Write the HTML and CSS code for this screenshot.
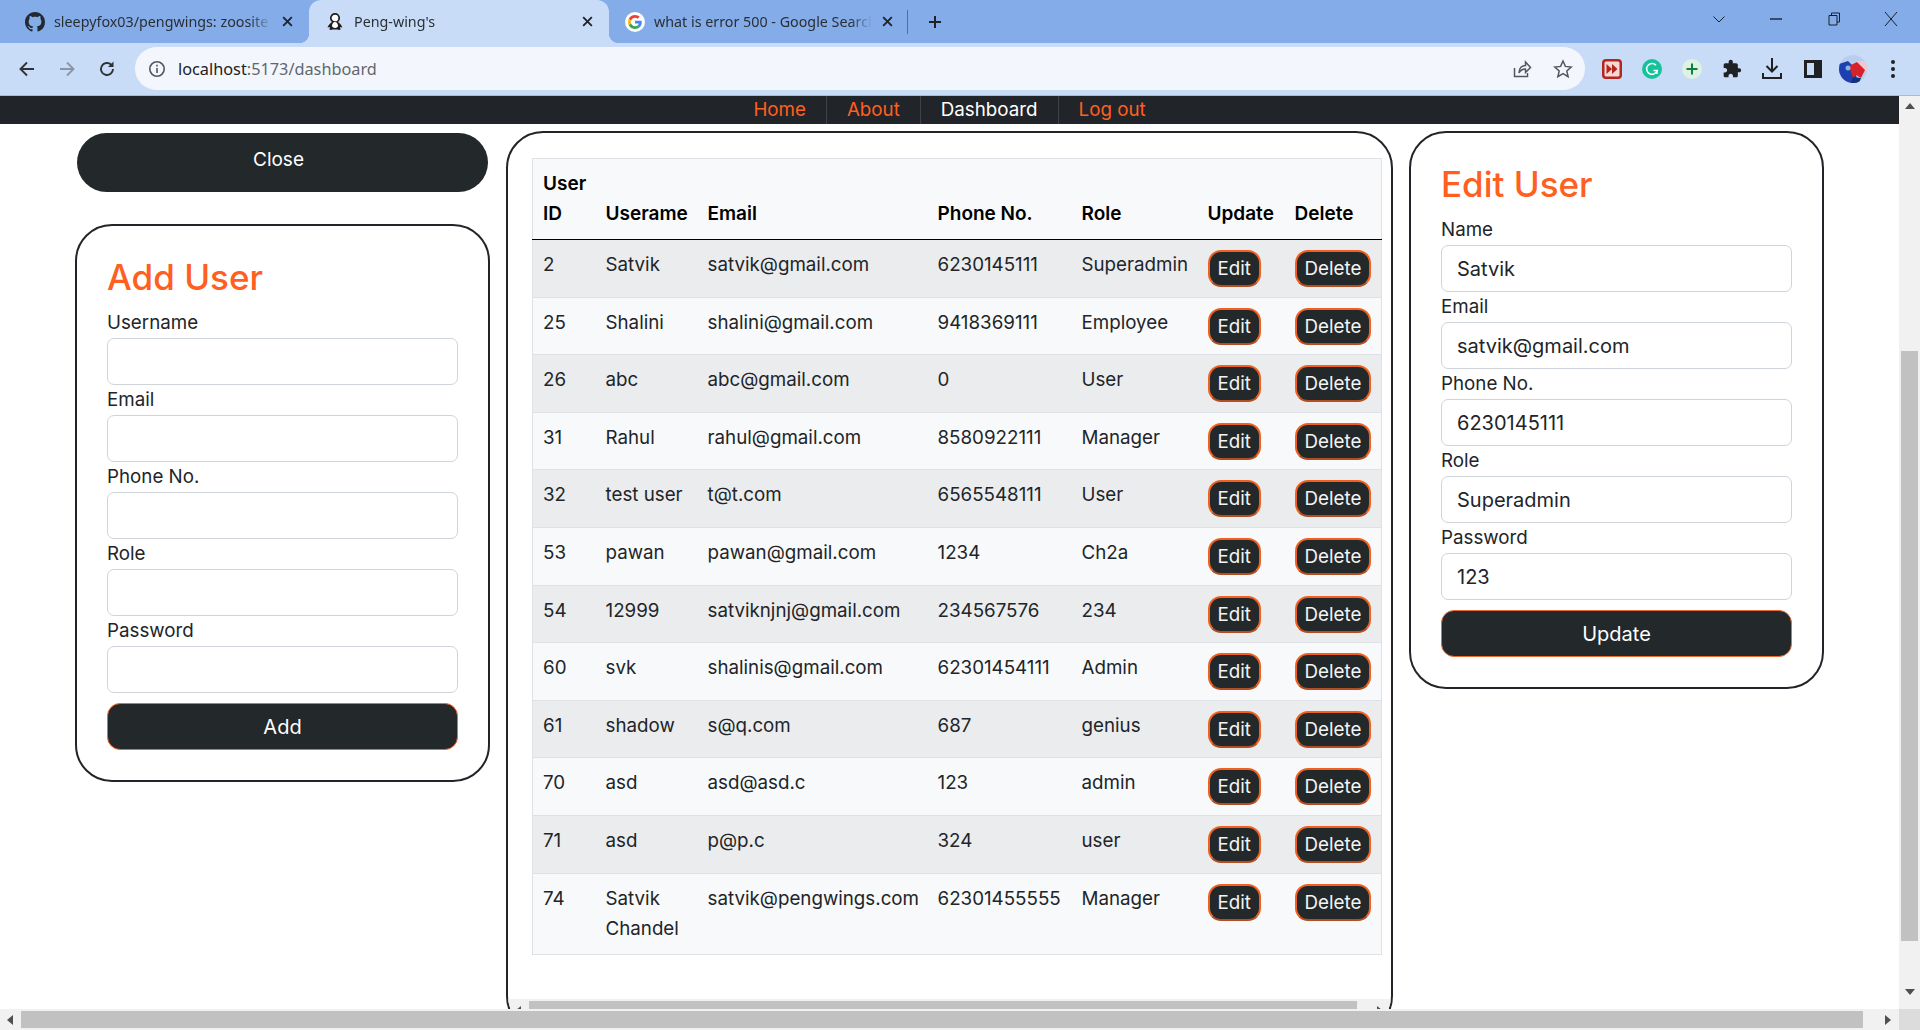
FILE: index.html
```html
<!DOCTYPE html>
<html lang="en">
<head>
    <meta charset="UTF-8">
    <meta name="viewport" content="width=device-width, initial-scale=1.0">
    <title>Peng-wing's</title>
    <link rel="stylesheet" href="styles.css">
</head>
<body>
    <!-- browser chrome -->
    <div class="tabstrip">
        <div class="tab">
            <svg class="tab-icon" viewBox="0 0 16 16"><path fill="#24292f" d="M8 0C3.58 0 0 3.58 0 8c0 3.54 2.29 6.53 5.47 7.59.4.07.55-.17.55-.38 0-.19-.01-.82-.01-1.49-2.01.37-2.53-.49-2.69-.94-.09-.23-.48-.94-.82-1.13-.28-.15-.68-.52-.01-.53.63-.01 1.08.58 1.23.82.72 1.21 1.87.87 2.33.66.07-.52.28-.87.51-1.07-1.78-.2-3.64-.89-3.64-3.95 0-.87.31-1.59.82-2.15-.08-.2-.36-1.02.08-2.12 0 0 .67-.21 2.2.82.64-.18 1.32-.27 2-.27.68 0 1.36.09 2 .27 1.53-1.04 2.2-.82 2.2-.82.44 1.1.16 1.92.08 2.12.51.56.82 1.27.82 2.15 0 3.07-1.87 3.75-3.65 3.95.29.25.54.73.54 1.48 0 1.07-.01 1.93-.01 2.2 0 .21.15.46.55.38A8.013 8.013 0 0016 8c0-4.42-3.58-8-8-8z"/></svg>
            <span class="tab-title">sleepyfox03/pengwings: zoosite is</span>
            <svg class="tab-close" viewBox="0 0 12 12"><path d="M2 2l8 8M10 2l-8 8"/></svg>
        </div>
        <div class="tab tab-active">
            <svg class="tab-icon" viewBox="0 0 20 20"><path fill="#1d1d1f" d="M10 9c-3 0-6 3-7.500 6.500L5 15l-.6 2.500c1 .5 2.200.5 3.100 0h5c.9.5 2.100.5 3.100 0L15 15l2.500.5C16 12 13 9 10 9z"/><circle cx="10" cy="6" r="4.200" fill="#fff" stroke="#1d1d1f" stroke-width="1.700"/><path fill="#fff" d="M10 10c-1.800 0-3 2-3 3.800 0 1.300 1.300 2.200 3 2.200s3-.9 3-2.200c0-1.800-1.200-3.800-3-3.800z"/></svg>
            <span class="tab-title">Peng-wing's</span>
            <svg class="tab-close" viewBox="0 0 12 12"><path d="M2 2l8 8M10 2l-8 8"/></svg>
        </div>
        <div class="tab">
            <span class="tab-icon g-circle">
                <svg viewBox="0 0 48 48"><path fill="#EA4335" d="M24 9.500c3.500 0 6.700 1.200 9.200 3.600l6.900-6.900C35.900 2.400 30.500 0 24 0 14.600 0 6.500 5.400 2.600 13.200l8 6.200C12.400 13.700 17.700 9.500 24 9.500z"/><path fill="#4285F4" d="M47 24.500c0-1.600-.1-3.100-.4-4.500H24v9h12.900c-.6 3-2.200 5.500-4.700 7.200l7.700 6C44.400 37.900 47 31.800 47 24.500z"/><path fill="#FBBC05" d="M10.500 28.600c-.5-1.400-.8-3-.8-4.600s.3-3.200.8-4.600l-8-6.200C.9 16.500 0 20.100 0 24s.9 7.500 2.600 10.800l7.900-6.200z"/><path fill="#34A853" d="M24 48c6.500 0 11.900-2.100 15.900-5.800l-7.700-6c-2.100 1.400-4.900 2.300-8.200 2.300-6.300 0-11.600-4.200-13.500-9.900l-8 6.200C6.500 42.600 14.600 48 24 48z"/></svg>
            </span>
            <span class="tab-title">what is error 500 - Google Search</span>
            <svg class="tab-close" viewBox="0 0 12 12"><path d="M2 2l8 8M10 2l-8 8"/></svg>
        </div>
        <div class="tab-sep"></div>
        <svg class="new-tab" viewBox="0 0 16 16"><path d="M8 2v12M2 8h12"/></svg>
        <div class="window-controls">
            <div class="win-btn"><svg viewBox="0 0 14 14" width="14" height="14"><path d="M1.500 4.500L7 10l5.500-5.500"/></svg></div>
            <div class="win-btn"><svg viewBox="0 0 14 14" width="14" height="14"><path d="M1 7h12" stroke-width="1.400"/></svg></div>
            <div class="win-btn"><svg viewBox="0 0 14 14" width="14" height="14"><path d="M2 3.500h8V13H2zM4.500 3.500V1H12.500v9H10"/></svg></div>
            <div class="win-btn"><svg viewBox="0 0 14 14" width="14" height="14"><path d="M1 0l12 14M13 0L1 14"/></svg></div>
        </div>
    </div>

    <div class="toolbar">
        <div class="tool-nav">
            <svg class="tool-icon" viewBox="0 0 20 20"><path d="M17 10H4M10 3.500L3.500 10l6.500 6.500"/></svg>
            <svg class="tool-icon tool-icon-off" viewBox="0 0 20 20"><path d="M3 10h13M10 3.500l6.500 6.500-6.500 6.500"/></svg>
            <svg class="tool-icon" viewBox="0 0 20 20"><path d="M16 10a6 6 0 1 1-1.800-4.300"/><path class="solid" d="M16.500 2.500v5.500H11z"/></svg>
        </div>
        <div class="address">
            <svg class="info-icon" viewBox="0 0 18 18"><circle cx="9" cy="9" r="7.200"/><path d="M9 8v5M9 4.800v1.600"/></svg>
            <span class="url"><span class="url-host">localhost</span>:5173/dashboard</span>
            <svg class="addr-icon" viewBox="0 0 20 20"><path d="M2.500 9v8.500h13V14"/><path d="M7 14c0-5 3-7.500 6.500-7.500V3l5 5.500-5 5V10c-3 0-5 1-6.500 4z"/></svg>
            <svg class="addr-icon" viewBox="0 0 20 20"><path d="M10 2l2.400 5.400 5.800.6-4.400 3.900 1.300 5.800-5.100-3-5.100 3 1.300-5.800L1.800 8l5.800-.6z"/></svg>
        </div>
        <div class="extensions">
            <div class="ext"><svg width="20" height="20" viewBox="0 0 20 20"><rect width="20" height="20" rx="4" fill="#b3261e"/><rect x="2.500" y="2.500" width="15" height="15" rx="1.500" fill="#f6d9d6"/><path fill="#b3261e" d="M4.500 5l5.500 5-5.500 5zM10 5l5.500 5-5.500 5z"/></svg></div>
            <div class="ext"><svg width="20" height="20" viewBox="0 0 20 20"><circle cx="10" cy="10" r="10" fill="#15c39a"/><path fill="none" stroke="#fff" stroke-width="1.600" d="M14 6.200A5.400 5.400 0 1 0 15.200 11.500H11.500"/><path fill="#fff" d="M15.800 15l-3.200-.4 2.800-2.800z"/></svg></div>
            <div class="ext"><svg width="20" height="20" viewBox="0 0 20 20"><circle cx="10" cy="10" r="10" fill="#dff1e2"/><path fill="none" stroke="#0b8043" stroke-width="2" d="M10 4.500v11M4.500 10h11"/></svg></div>
            <div class="ext"><svg width="20" height="20" viewBox="0 0 24 24"><path fill="#202124" d="M20.500 11H19V7c0-1.100-.9-2-2-2h-4V3.500C13 2.120 11.880 1 10.500 1S8 2.120 8 3.500V5H4c-1.100 0-1.990.9-1.990 2v3.800H3.500c1.490 0 2.700 1.210 2.700 2.700s-1.210 2.700-2.700 2.700H2V20c0 1.100.9 2 2 2h3.800v-1.500c0-1.490 1.210-2.700 2.700-2.700 1.490 0 2.700 1.210 2.700 2.700V22H17c1.100 0 2-.9 2-2v-4h1.500c1.380 0 2.500-1.120 2.500-2.500S21.880 11 20.500 11z"/></svg></div>
            <div class="ext"><svg width="20" height="21" viewBox="0 0 20 21" fill="none" stroke="#202124" stroke-width="2"><path d="M10 0v13M4.500 8l5.500 5.500L15.500 8M1 15v5h18v-5"/></svg></div>
            <div class="ext"><svg width="18" height="18" viewBox="0 0 18 18"><path fill="#202124" fill-rule="evenodd" d="M0 0h18v18H0zM3 3v12h7V3z"/></svg></div>
            <div class="ext"><svg width="28" height="28" viewBox="0 0 28 28"><defs><clipPath id="avatarClip"><circle cx="14" cy="14" r="14"/></clipPath></defs><g clip-path="url(#avatarClip)"><rect width="28" height="28" fill="#b9cdee"/><path fill="#f1c7cf" d="M17 6h11v10H22z"/><path fill="#1d3fb0" d="M0 9l9-3 6 6 4 16H0z"/><path fill="#d8222a" d="M10 11l8-4 8 8-4 8-5-3-3 3z"/><path fill="#12307f" d="M14 22l8 1-2 5h-8z"/><circle cx="9" cy="13" r="2.500" fill="#7db6e8"/></g></svg></div>
            <div class="ext"><svg width="6" height="20" viewBox="0 0 6 20"><circle cx="3" cy="3" r="2" fill="#202124"/><circle cx="3" cy="10" r="2" fill="#202124"/><circle cx="3" cy="17" r="2" fill="#202124"/></svg></div>
        </div>
    </div>

    <!-- page -->
    <div class="viewport">
        <div class="page">
            <nav class="navbar">
                <a class="nav-link">Home</a>
                <a class="nav-link">About</a>
                <a class="nav-link nav-current">Dashboard</a>
                <a class="nav-link">Log out</a>
            </nav>
            <main class="dashboard">
                <div class="side-col">
                    <button class="close-btn">Close</button>
                    <form class="card">
                        <h3>Add User</h3>
                        <label>Username</label>
                        <input type="text">
                        <label>Email</label>
                        <input type="text">
                        <label>Phone No.</label>
                        <input type="text">
                        <label>Role</label>
                        <input type="text">
                        <label>Password</label>
                        <input type="text">
                        <button class="submit-btn" type="button">Add</button>
                    </form>
                </div>

                <div class="card table-card">
                    <table class="users-table">
                        <colgroup>
                            <col class="col-id"><col class="col-name"><col class="col-email"><col class="col-phone"><col class="col-role"><col class="col-update"><col class="col-delete">
                        </colgroup>
                        <thead>
                            <tr><th>User ID</th><th>Userame</th><th>Email</th><th>Phone No.</th><th>Role</th><th>Update</th><th>Delete</th></tr>
                        </thead>
                        <tbody>
                            <tr><td>2</td><td>Satvik</td><td>satvik@gmail.com</td><td>6230145111</td><td>Superadmin</td><td><button class="row-btn">Edit</button></td><td><button class="row-btn">Delete</button></td></tr>
                            <tr><td>25</td><td>Shalini</td><td>shalini@gmail.com</td><td>9418369111</td><td>Employee</td><td><button class="row-btn">Edit</button></td><td><button class="row-btn">Delete</button></td></tr>
                            <tr><td>26</td><td>abc</td><td>abc@gmail.com</td><td>0</td><td>User</td><td><button class="row-btn">Edit</button></td><td><button class="row-btn">Delete</button></td></tr>
                            <tr><td>31</td><td>Rahul</td><td>rahul@gmail.com</td><td>8580922111</td><td>Manager</td><td><button class="row-btn">Edit</button></td><td><button class="row-btn">Delete</button></td></tr>
                            <tr><td>32</td><td>test user</td><td>t@t.com</td><td>6565548111</td><td>User</td><td><button class="row-btn">Edit</button></td><td><button class="row-btn">Delete</button></td></tr>
                            <tr><td>53</td><td>pawan</td><td>pawan@gmail.com</td><td>1234</td><td>Ch2a</td><td><button class="row-btn">Edit</button></td><td><button class="row-btn">Delete</button></td></tr>
                            <tr><td>54</td><td>12999</td><td>satviknjnj@gmail.com</td><td>234567576</td><td>234</td><td><button class="row-btn">Edit</button></td><td><button class="row-btn">Delete</button></td></tr>
                            <tr><td>60</td><td>svk</td><td>shalinis@gmail.com</td><td>62301454111</td><td>Admin</td><td><button class="row-btn">Edit</button></td><td><button class="row-btn">Delete</button></td></tr>
                            <tr><td>61</td><td>shadow</td><td>s@q.com</td><td>687</td><td>genius</td><td><button class="row-btn">Edit</button></td><td><button class="row-btn">Delete</button></td></tr>
                            <tr><td>70</td><td>asd</td><td>asd@asd.c</td><td>123</td><td>admin</td><td><button class="row-btn">Edit</button></td><td><button class="row-btn">Delete</button></td></tr>
                            <tr><td>71</td><td>asd</td><td>p@p.c</td><td>324</td><td>user</td><td><button class="row-btn">Edit</button></td><td><button class="row-btn">Delete</button></td></tr>
                            <tr><td>74</td><td>Satvik Chandel</td><td>satvik@pengwings.com</td><td>62301455555</td><td>Manager</td><td><button class="row-btn">Edit</button></td><td><button class="row-btn">Delete</button></td></tr>
                        </tbody>
                    </table>
                    <div class="inner-scroll">
                        <svg class="arrow" width="5" height="8" viewBox="0 0 5 8"><path d="M5 0v8L0 4z"/></svg>
                        <div class="inner-thumb"></div>
                        <svg class="arrow" width="5" height="8" viewBox="0 0 5 8"><path d="M0 0v8l5-4z"/></svg>
                    </div>
                </div>

                <form class="card edit-card">
                    <h3>Edit User</h3>
                    <label>Name</label>
                    <input type="text" value="Satvik">
                    <label>Email</label>
                    <input type="text" value="satvik@gmail.com">
                    <label>Phone No.</label>
                    <input type="text" value="6230145111">
                    <label>Role</label>
                    <input type="text" value="Superadmin">
                    <label>Password</label>
                    <input type="text" value="123">
                    <button class="submit-btn" type="button">Update</button>
                </form>
            </main>
            <div class="hscroll">
                <svg class="arrow" width="6" height="10" viewBox="0 0 6 10"><path d="M6 0v10L0 5z"/></svg>
                <div class="hscroll-thumb"></div>
                <svg class="arrow" width="6" height="10" viewBox="0 0 6 10"><path d="M0 0v10l6-5z"/></svg>
            </div>
        </div>
        <div class="vscroll">
            <svg class="arrow" width="10" height="6" viewBox="0 0 10 6"><path d="M0 6h10L5 0z"/></svg>
            <div class="vscroll-gap"></div>
            <div class="vscroll-thumb"></div>
            <svg class="arrow" width="10" height="6" viewBox="0 0 10 6"><path d="M0 0h10L5 6z"/></svg>
            <div class="scroll-corner"></div>
        </div>
    </div>
</body>
</html>
```

FILE: styles.css
```css
* {
    box-sizing: border-box;
}

html, body {
    height: 100%;
}

body {
    margin: 0;
    overflow: hidden;
    display: flex;
    flex-direction: column;
    font-family: Inter, "Liberation Sans", sans-serif;
    font-size: 18.75px;
    line-height: 30px;
    color: #212529;
    background: #fff;
}

/* tab strip */
.tabstrip {
    height: 43px;
    flex: none;
    display: flex;
    align-items: center;
    padding-left: 9px;
    background: #83ace9;
    font-family: "Noto Sans", sans-serif;
}

.tab {
    width: 300px;
    height: 43px;
    padding: 0 15px 0 16px;
    display: flex;
    align-items: center;
    gap: 9px;
    font-size: 14.3px;
    line-height: 40px;
    color: #2a2f36;
    position: relative;
}

.tab-active {
    background: #c9dcf7;
    border-radius: 12px 12px 0 0;
}

.tab-active::before,
.tab-active::after {
    content: "";
    position: absolute;
    bottom: 0;
    width: 10px;
    height: 10px;
}

.tab-active::before {
    left: -10px;
    background: radial-gradient(circle at 0 0, transparent 10px, #c9dcf7 10.5px);
}

.tab-active::after {
    right: -10px;
    background: radial-gradient(circle at 100% 0, transparent 10px, #c9dcf7 10.5px);
}

.tab-icon {
    width: 20px;
    height: 20px;
    flex: none;
}

.g-circle {
    background: #fff;
    border-radius: 50%;
    padding: 3px;
    display: flex;
}

.tab-title {
    flex: 1;
    min-width: 0;
    white-space: nowrap;
    overflow: hidden;
    -webkit-mask-image: linear-gradient(to right, #000 90%, transparent);
    mask-image: linear-gradient(to right, #000 90%, transparent);
}

.tab-close {
    width: 13px;
    height: 13px;
    flex: none;
    fill: none;
    stroke: #1f2329;
    stroke-width: 1.7;
}

.tab-sep {
    width: 1px;
    height: 24px;
    margin-left: -2px;
    background: #4f6f9f;
}

.new-tab {
    width: 16px;
    height: 16px;
    margin-left: 19px;
    fill: none;
    stroke: #1f2329;
    stroke-width: 2;
}

.window-controls {
    margin-left: auto;
    align-self: flex-start;
    display: flex;
}

.win-btn {
    width: 57.5px;
    height: 37px;
    display: flex;
    align-items: center;
    justify-content: center;
}

.win-btn svg {
    fill: none;
    stroke: #1c2026;
    stroke-width: 1;
}

/* address row */
.toolbar {
    height: 53px;
    flex: none;
    display: flex;
    align-items: center;
    padding-bottom: 1px;
    background: #c9dcf7;
    border-bottom: 1px solid #a8bbd8;
}

.tool-nav {
    width: 135px;
    flex: none;
    padding-left: 17px;
    display: flex;
    gap: 20px;
}

.tool-icon {
    width: 20px;
    height: 20px;
    fill: none;
    stroke: #2f3338;
    stroke-width: 1.9;
}

.tool-icon-off {
    stroke: #8a96a8;
}

.tool-icon .solid {
    fill: #2f3338;
    stroke: none;
}

.address {
    width: 1450px;
    height: 43px;
    flex: none;
    padding: 0 12px 0 13px;
    display: flex;
    align-items: center;
    background: #f3f7fd;
    border-radius: 22px;
}

.info-icon {
    width: 18px;
    height: 18px;
    flex: none;
    fill: none;
    stroke: #53575c;
    stroke-width: 1.6;
}

.url {
    flex: 1;
    margin-left: 12px;
    font-family: "Noto Sans", sans-serif;
    font-size: 16.3px;
    color: #62666c;
}

.url-host {
    color: #202124;
}

.addr-icon {
    width: 20px;
    height: 20px;
    margin-left: 21px;
    flex: none;
    fill: none;
    stroke: #53575c;
    stroke-width: 1.5;
}

.extensions {
    display: flex;
    padding-left: 7px;
}

.ext {
    width: 40.1px;
    height: 40px;
    display: flex;
    align-items: center;
    justify-content: center;
}

/* page */
.viewport {
    flex: 1;
    display: flex;
    min-height: 0;
}

.page {
    flex: 1;
    min-width: 0;
    display: flex;
    flex-direction: column;
}

.navbar {
    height: 28px;
    flex: none;
    display: flex;
    justify-content: center;
    background: #212529;
    line-height: 28px;
    overflow: hidden;
}

.nav-link {
    padding: 0 20px;
    color: #ff5f1f;
    border-right: 1px solid #3d4247;
}

.nav-link:last-child {
    border-right: none;
}

.nav-current {
    color: #fff;
}

.dashboard {
    flex: 1;
    min-height: 0;
    overflow: hidden;
    display: flex;
    align-items: flex-start;
    gap: 16px;
    padding: 7px 0 0 75px;
}

.side-col {
    width: 415px;
    flex: none;
}

.close-btn {
    display: block;
    width: 411px;
    height: 59px;
    margin: 2px 2px 32px;
    padding: 0 8px 6px 0;
    background: #23292a;
    border: none;
    border-radius: 30px;
    color: #fff;
    font: inherit;
    font-size: 19px;
}

.card {
    display: block;
    width: 415px;
    padding: 30px;
    background: #fff;
    border: 2px solid #212529;
    border-radius: 37px;
}

.card h3 {
    margin: 0 0 10px;
    font-size: 35px;
    font-weight: 500;
    line-height: 42px;
    color: #ff5f1f;
}

.card label {
    display: block;
}

.card input {
    display: block;
    width: 100%;
    height: 47px;
    padding: 0 15px;
    border: 1px solid #ced4da;
    border-radius: 7px;
    font: inherit;
    font-size: 20px;
    color: #212529;
}

.submit-btn {
    display: block;
    width: 100%;
    height: 47px;
    margin-top: 10px;
    padding: 0;
    background: #23292a;
    border: 1px solid #ee6a33;
    border-radius: 13px;
    color: #fff;
    font: inherit;
    font-size: 20px;
}

.edit-card {
    flex: none;
}

/* table card */
.table-card {
    position: relative;
    width: 887px;
    height: 902px;
    flex: none;
    padding: 25px 10px 0 24px;
    overflow: hidden;
}

.users-table {
    width: 849px;
    table-layout: fixed;
    border-collapse: collapse;
    background: #f8f9fa;
    border: 1px solid #dee2e6;
    color: #212529;
}

.col-id { width: 63px; }
.col-name { width: 102px; }
.col-email { width: 230px; }
.col-phone { width: 144px; }
.col-role { width: 126px; }
.col-update { width: 87px; }
.col-delete { width: 97px; }

.users-table th {
    padding: 10px;
    text-align: left;
    vertical-align: bottom;
    font-weight: 600;
    font-size: 19px;
    color: #000;
    border-bottom: 1px solid #000;
}

.users-table td {
    height: 57.6px;
    padding: 10px;
    vertical-align: top;
    border-top: 1px solid #dee2e6;
}

.users-table td:nth-last-child(-n+2) {
    padding-bottom: 0;
}

.users-table tbody tr:nth-child(odd) td {
    background: #ebecee;
}

.users-table tbody tr:last-child td {
    background: #f8f9fa;
}

.row-btn {
    display: block;
    height: 37px;
    padding: 0 8px;
    background: #23292a;
    border: 2px solid #f2601f;
    border-bottom-color: #b44d20;
    border-radius: 13px;
    color: #f4f4f4;
    font-family: inherit;
    font-size: 18.75px;
}

/* painted scrollbars */
.inner-scroll {
    position: absolute;
    left: 0;
    right: 0;
    top: 866px;
    height: 21px;
    padding-left: 8px;
    padding-right: 9px;
    display: flex;
    align-items: center;
    gap: 8px;
    background: #f1f1f1;
}

.inner-thumb {
    flex: 1;
    height: 17px;
    margin-right: 12px;
    background: #c1c1c1;
}

.hscroll {
    height: 21px;
    flex: none;
    display: flex;
    align-items: center;
    padding: 0 8px 0 7px;
    gap: 8px;
    background: #f1f1f1;
}

.hscroll-thumb {
    flex: 1;
    height: 17px;
    margin-right: 14px;
    background: #c1c1c1;
}

.arrow {
    flex: none;
    fill: #505050;
}

.vscroll {
    width: 21px;
    flex: none;
    display: flex;
    flex-direction: column;
    align-items: center;
    padding-top: 7px;
    background: #f1f1f1;
}

.vscroll-gap {
    height: 242px;
    flex: none;
}

.vscroll-thumb {
    width: 17px;
    height: 590px;
    flex: none;
    background: #c1c1c1;
}

.vscroll .arrow:nth-last-child(2) {
    margin-top: 48px;
}

.scroll-corner {
    width: 21px;
    height: 21px;
    margin-top: auto;
    background: #dcdcdc;
}
```
